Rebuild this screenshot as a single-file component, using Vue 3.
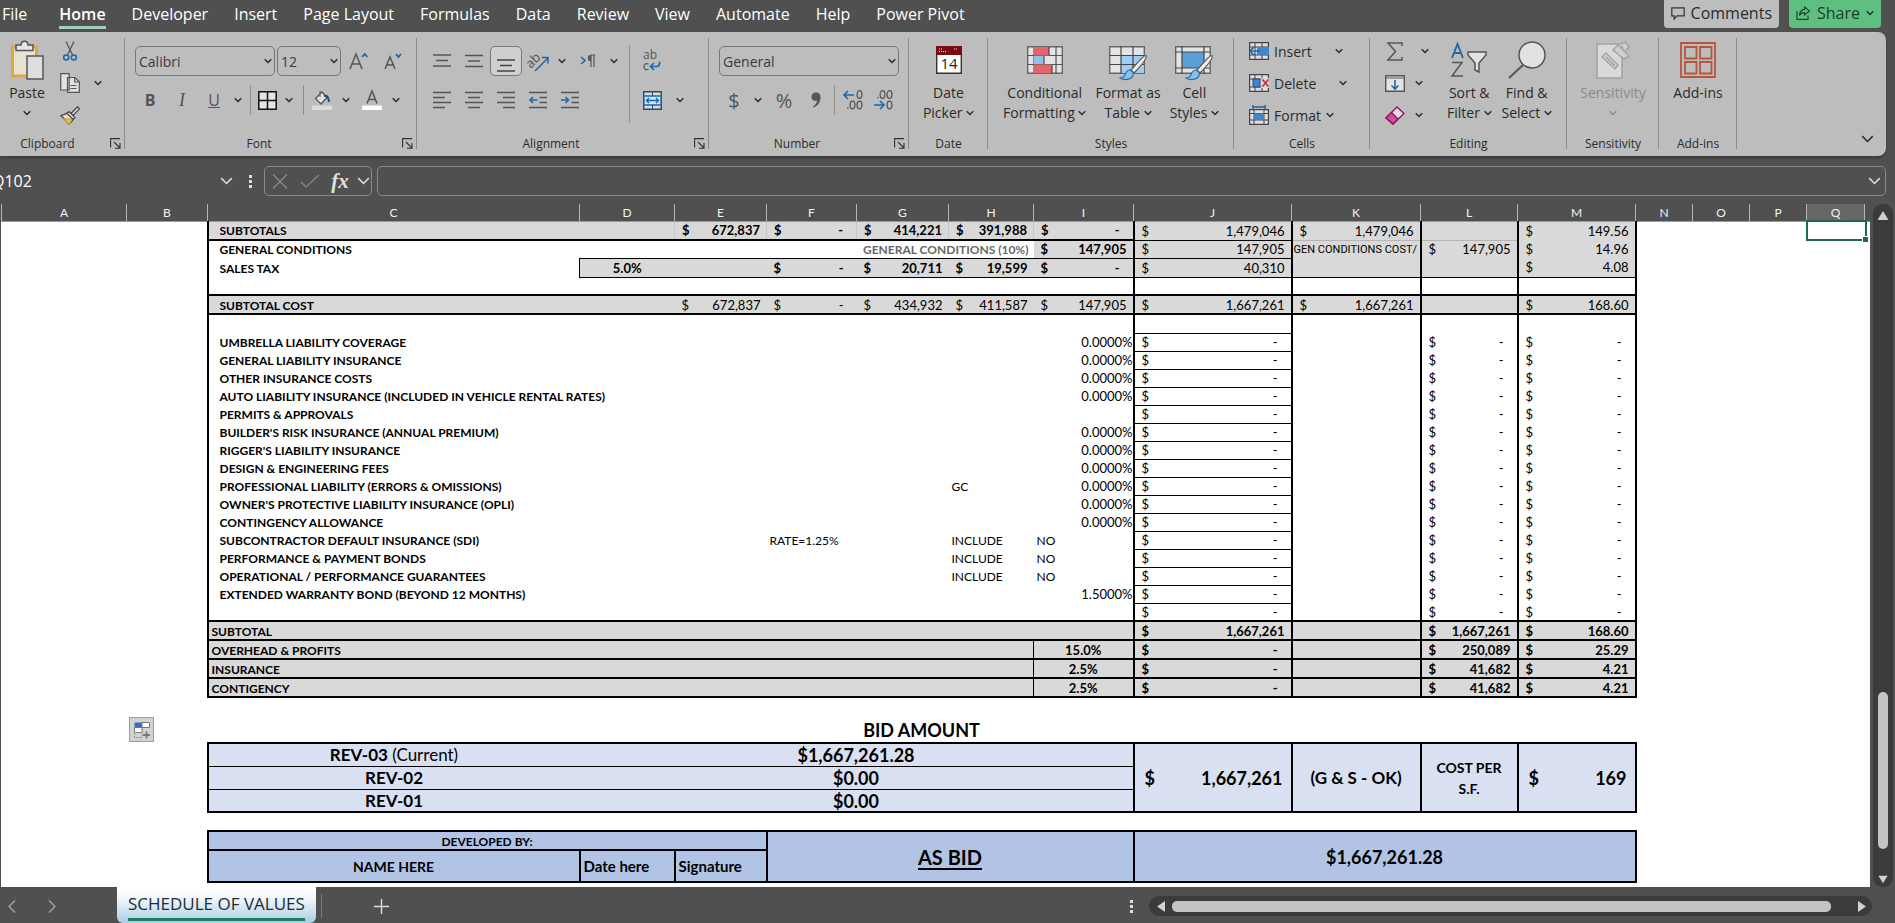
<script setup>
import { h, ref } from 'vue'

const tabs = ['File', 'Home', 'Developer', 'Insert', 'Page Layout', 'Formulas', 'Data', 'Review', 'View', 'Automate', 'Help', 'Power Pivot']
const fontName = ref('Calibri')
const fontSize = ref('12')
const numberFormat = ref('General')
const cellRef = ref('Q102')
const formula = ref('')

const Chev = (props) =>
  h('svg', { width: props.big ? 13 : 8, height: props.big ? 8 : 6, viewBox: '0 0 8 5', fill: 'none', stroke: 'currentColor', 'stroke-width': props.big ? 0.9 : 1.4, 'aria-hidden': 'true' }, [
    h('path', { d: 'M.7.7 4 4 7.3.7' }),
  ])
Chev.props = { big: Boolean }

const Launcher = () =>
  h('svg', { width: 11, height: 11, viewBox: '0 0 11 11', fill: 'none', stroke: '#333', 'stroke-width': 1.1 }, [
    h('path', { d: 'M.6 9.5V.6H10M4 4l6 6M10 5v5.2H5' }),
  ])

const columns = [
  ['A', 125], ['B', 81], ['C', 372], ['D', 95], ['E', 92], ['F', 90], ['G', 92], ['H', 85], ['I', 100],
  ['J', 158], ['K', 129], ['L', 97], ['M', 118], ['N', 57], ['O', 57], ['P', 57], ['Q', 58],
]

const t = (v, cls = '', span = 1, rows = 1) => ({ v, cls, span, rows })
const m = (v, cls = '', rows = 1) => ({ v, cls, span: 1, rows, acc: true })

const liability = [
  ['UMBRELLA LIABILITY COVERAGE', '0.0000%'],
  ['GENERAL LIABILITY INSURANCE', '0.0000%'],
  ['OTHER INSURANCE COSTS', '0.0000%'],
  ['AUTO LIABILITY INSURANCE (INCLUDED IN VEHICLE RENTAL RATES)', '0.0000%'],
  ['PERMITS & APPROVALS', ''],
  ["BUILDER'S RISK INSURANCE (ANNUAL PREMIUM)", '0.0000%'],
  ["RIGGER'S LIABILITY INSURANCE", '0.0000%'],
  ['DESIGN & ENGINEERING FEES', '0.0000%'],
  ['PROFESSIONAL LIABILITY (ERRORS & OMISSIONS)', '0.0000%', '', 'GC'],
  ["OWNER'S PROTECTIVE LIABILITY INSURANCE (OPLI)", '0.0000%'],
  ['CONTINGENCY ALLOWANCE', '0.0000%'],
  ['SUBCONTRACTOR DEFAULT INSURANCE (SDI)', 'NO', 'RATE=1.25%', 'INCLUDE'],
  ['PERFORMANCE & PAYMENT BONDS', 'NO', '', 'INCLUDE'],
  ['OPERATIONAL / PERFORMANCE GUARANTEES', 'NO', '', 'INCLUDE'],
  ['EXTENDED WARRANTY BOND (BEYOND 12 MONTHS)', '1.5000%'],
  ['', ''],
]

const rows = [
  { hgt: 19, cells: [
    t('SUBTOTALS', 'g b lab L B', 2), m('672,837', 'g b B fl'), m('-', 'g b B fl'), m('414,221', 'g b B fl'), m('391,988', 'g b B fl'), m('-', 'g b B fl'),
    m('1,479,046', 'g L R u'), m('1,479,046', 'g R fb'), t('', 'g R fb'), m('149.56', 'g R')] },
  { hgt: 18, cells: [
    t('GENERAL CONDITIONS', 'b lab L', 4), t('GENERAL CONDITIONS (10%)', 'b right dim', 2), m('147,905', 'g b u'),
    m('147,905', 'g L R u'), t('GEN CONDITIONS COST/', 'g R tight'), m('147,905', 'g R'), m('14.96', 'g R')] },
  { hgt: 19, cells: [
    t('SALES TAX', 'b lab L'), t('5.0%', 'g b mid l o u'), t('', 'g u o'), m('-', 'g b u o'), m('20,711', 'g b u o'), m('19,599', 'g b u o'), m('-', 'g b u o'),
    m('40,310', 'g L R u'), t('', 'g R u'), t('', 'g R u'), m('4.08', 'g R u')] },
  { hgt: 18, cells: [t('', 'L', 7), t('', 'L R'), t('', 'R'), t('', 'R'), t('', 'R')] },
  { hgt: 19, cells: [
    t('SUBTOTAL COST', 'g b lab L B T', 2), m('672,837', 'g B T'), m('-', 'g B T'), m('434,932', 'g B T'), m('411,587', 'g B T'), m('147,905', 'g B T'),
    m('1,667,261', 'g L R B T'), m('1,667,261', 'g R B T'), t('', 'g R B T'), m('168.60', 'g R B T')] },
  { hgt: 19, cells: [t('', 'L', 7), t('', 'L R u'), t('', 'R'), t('', 'R'), t('', 'R')] },
  ...liability.map(([name, rate, f = '', hh = '']) => ({ hgt: 18, cells: [
    t(name, 'b lab L', 3), t(f, 'near', 2), t(hh, 'near'), t(rate, rate === 'NO' ? 'near' : 'pct'),
    m('-', 'L R u'), t('', 'R'), m('-', 'R'), m('-', 'R')] })),
  { hgt: 19, cells: [t('SUBTOTAL', 'g b near L B T', 7), m('1,667,261', 'g b L R B T'), t('', 'g R B T'), m('1,667,261', 'g b R B T'), m('168.60', 'g b R B T')] },
  ...[['OVERHEAD & PROFITS', '15.0%', '250,089', '25.29'], ['INSURANCE', '2.5%', '41,682', '4.21'], ['CONTIGENCY', '2.5%', '41,682', '4.21']].map(([n, p, a, c]) => ({
    hgt: 19, cells: [t(n, 'g b near L B', 6), t(p, 'g b mid l B'), m('-', 'g b L R B'), t('', 'g R B'), m(a, 'g b R B'), m(c, 'g b R B')] })),
  { hgt: 18, cells: [t('', '', 11)] },
  { hgt: 28, cells: [t('BID AMOUNT', 'b mid x18 low', 11)] },
  { hgt: 23, cells: [
    { v: 'REV-03', tail: ' (Current)', cls: 'p b mid x17 L T u', span: 1, rows: 1 }, t('$1,667,261.28', 'p b mid x18 T u', 6),
    m('1,667,261', 'p b x18 wide L R T B', 3), t('(G & S - OK)', 'p b mid x17 R T B', 1, 3), t('COST PER S.F.', 'p b mid x14 R T B wrap', 1, 3), m('169', 'p b x18 wide R T B', 3)] },
  { hgt: 23, cells: [t('REV-02', 'p b mid x17 L u'), t('$0.00', 'p b mid x18 u', 6)] },
  { hgt: 23, cells: [t('REV-01', 'p b mid x17 L B'), t('$0.00', 'p b mid x18 B', 6)] },
  { hgt: 19, cells: [t('', '', 11)] },
  { hgt: 19, cells: [t('DEVELOPED BY:', 'd b mid x12 L T B R', 3), t('AS BID', 'd b mid x20 ul L T B R', 4, 2), t('$1,667,261.28', 'd b mid x18 L T B R', 4, 2)] },
  { hgt: 32, cells: [t('NAME HERE', 'd b mid x14 L B R'), t('Date here', 'd b near x15 B R'), t('Signature', 'd b near x15 B R')] },
]
</script>

<template>
  <div class="app">
    <header class="menu">
      <nav class="tabs" aria-label="Ribbon tabs">
        <a v-for="tab in tabs" :key="tab" href="#" :class="{ on: tab === 'Home' }">{{ tab }}</a>
      </nav>
      <div class="actions">
        <button class="comments" type="button">
          <svg width="14" height="13" viewBox="0 0 14 13" fill="none" stroke="#333" stroke-width="1.2"><path d="M.8.8h12.4v8H6L3.2 12V8.800H.8z" /></svg>
          Comments
        </button>
        <button class="share" type="button">
          <svg width="15" height="14" viewBox="0 0 15 14" fill="none" stroke="#1d4a2e" stroke-width="1.2"><path d="M1 5v8.300h11V9.500M8.500 1l5 4-5 4V6.600C6 6.600 4.500 7.500 3.500 9.500 3.700 6 5.500 3.600 8.500 3.400z" /></svg>
          Share
          <Chev />
        </button>
      </div>
    </header>

    <section class="ribbon" aria-label="Home ribbon">
      <div class="group clip-g">
        <div class="body lines">
          <button type="button" class="big paste">
            <span class="pic">
              <svg width="36" height="40" viewBox="0 0 36 40" fill="none">
                <path d="M3.500 7h24v29h-24z" fill="#e9e2d3" stroke="#e0a83a" stroke-width="3" />
                <path d="M7 10.500V5h5c.5-5 6.500-5 7 0h5v5.500z" fill="#e6e6e6" stroke="#555" stroke-width="1.500" />
                <path d="M18 16h16v23H18z" fill="#dedede" stroke="#555" stroke-width="1.500" />
              </svg>
            </span>
            <span>Paste</span><span><Chev /></span>
          </button>
          <div class="stack three">
            <button type="button" class="w28" aria-label="Cut">
              <svg width="14" height="20" viewBox="0 0 14 20" fill="none"><path d="M3 .5 9.600 14M11 .5 4.400 14" stroke="#555" stroke-width="1.300" /><circle cx="3.200" cy="16.500" r="2.500" stroke="#1f66a5" stroke-width="1.600" /><circle cx="10.800" cy="16.500" r="2.500" stroke="#1f66a5" stroke-width="1.600" /></svg>
            </button>
            <button type="button" class="w28" aria-label="Copy">
              <svg width="20" height="20" viewBox="0 0 20 20" fill="#e2e2e2" stroke="#555" stroke-width="1.200"><path d="M.7.700h8.500V17H.700zM7.500 4.500h7.500l4.300 4.300v10.500H7.500z" /><path d="M14.700 4.700V9h4.500M10.500 12.500h6M10.500 15.500h6" fill="none" /></svg>
            </button>
            <button type="button" class="w28" aria-label="Format Painter">
              <svg width="20" height="19" viewBox="0 0 20 19" fill="none" stroke="#444" stroke-width="1.200"><path d="M1 9.500 9 18c2.500-1.500 4-3.500 4.500-6L8 6.500c-2 1.500-4 2.500-7 3z" fill="#e8e0d0" /><path d="M4 12.500l8 1-3 4.500z" fill="#f2c53d" stroke="#caa02c" /><path d="M7 7.500l2-2 6 6-2 2zM11 7.500 17.500.800l2 2L13 9.500z" fill="#ddd" /></svg>
            </button>
          </div>
          <button type="button" class="w28 copyopt" aria-label="Copy options"><Chev /></button>
        </div>
        <div class="cap">Clipboard</div><button type="button" class="launch" aria-label="Clipboard settings"><Launcher /></button>
      </div>

      <div class="group font-g">
        <div class="body rows">
          <div class="row fields">
            <label class="pick grow"><select v-model="fontName" aria-label="Font"><option>Calibri</option></select><Chev /></label>
            <label class="pick size"><select v-model="fontSize" aria-label="Font size"><option>12</option></select><Chev /></label>
            <button type="button" class="w32" aria-label="Increase font size"><svg width="20" height="18" viewBox="0 0 20 18" fill="none" stroke="#555" stroke-width="1.500"><path d="M1 17 7 2l6 15M3 12h8" /><path d="M13 5l2.700-3 2.700 3" stroke="#1f66a5" stroke-width="1.800" /></svg></button>
            <button type="button" class="w32" aria-label="Decrease font size"><svg width="18" height="18" viewBox="0 0 18 18" fill="none" stroke="#555" stroke-width="1.500"><path d="M1 17 6 5l5 12M3 13h6" /><path d="M12 2l2.500 3L17 2" stroke="#1f66a5" stroke-width="1.800" /></svg></button>
          </div>
          <div class="row">
            <button type="button" class="w32 glyph bold">B</button>
            <button type="button" class="w32 glyph ital">I</button>
            <button type="button" class="w32 glyph under">U</button>
            <button type="button" class="w16" aria-label="Underline options"><Chev /></button>
            <i class="sep"></i>
            <button type="button" class="w24" aria-label="Borders"><svg width="19" height="19" viewBox="0 0 19 19" fill="#e4e4e4" stroke="#111" stroke-width="1.500"><path d="M.8.800h17.400v17.400H.800zM9.500.800v17.400M.800 9.500h17.400" /></svg></button>
            <button type="button" class="w20" aria-label="Border options"><Chev /></button>
            <i class="sep"></i>
            <button type="button" class="w28" aria-label="Fill color"><svg width="20" height="20" viewBox="0 0 20 20" fill="none"><path d="M3.500 8.500 10 2l5 5.500L9 14z" fill="#e2e2e2" stroke="#555" stroke-width="1.300" /><path d="M8 1v6" stroke="#555" /><path d="M12 6c3-1 4.500 1 5 6" stroke="#1f4e79" stroke-width="2" /><path d="M0 15.500h20V20H0z" fill="#dcdcdc" /></svg></button>
            <button type="button" class="w20" aria-label="Fill options"><Chev /></button>
            <button type="button" class="w32" aria-label="Font color"><svg width="20" height="20" viewBox="0 0 20 20" fill="none"><path d="M5 13.500 10 1l5 12.500M6.700 9.500h6.600" stroke="#555" stroke-width="1.500" /><path d="M0 15.500h20V20H0z" fill="#fff" /></svg></button>
            <button type="button" class="w16" aria-label="Font color options"><Chev /></button>
          </div>
        </div>
        <div class="cap">Font</div><button type="button" class="launch" aria-label="Font settings"><Launcher /></button>
      </div>

      <div class="group align-g">
        <div class="body cols">
          <div class="rows">
            <div class="row fields">
              <button type="button" class="w32" aria-label="Top align"><svg width="18" height="14" viewBox="0 0 18 14" stroke="#555" stroke-width="1.400"><path d="M0 1h18M3 6.500h12M0 12h18" /></svg></button>
              <button type="button" class="w32" aria-label="Middle align"><svg width="18" height="14" viewBox="0 0 18 14" stroke="#555" stroke-width="1.400"><path d="M0 1.500h18M3 7h12M0 12.500h18" /></svg></button>
              <button type="button" class="w32 sel" aria-label="Bottom align"><svg width="18" height="22" viewBox="0 0 18 22" stroke="#444" stroke-width="1.400"><path d="M0 10h18M3 15.500h12M0 21h18" /></svg></button>
              <button type="button" class="w32" aria-label="Orientation"><svg width="22" height="22" viewBox="0 0 22 22"><text x="-2" y="13" transform="rotate(-45 8 9)" font-family="Open Sans, sans-serif" font-size="13" fill="#555">ab</text><path d="M8 21 21 8M15 7.500H21V13.500" fill="none" stroke="#1f66a5" stroke-width="1.500" /></svg></button>
              <button type="button" class="w16" aria-label="Orientation options"><Chev /></button>
              <button type="button" class="w36" aria-label="Text direction"><svg width="16" height="14" viewBox="0 0 16 14" fill="none"><path d="M1 3l4 3.500L1 10" stroke="#1f66a5" stroke-width="1.600" /><path d="M11 13V1M14 13V1M15.500 1H11" stroke="#555" stroke-width="1.200" /><path d="M11 .800a3.200 3.200 0 0 0 0 6.400z" fill="#555" /></svg></button>
              <button type="button" class="w16" aria-label="Direction options"><Chev /></button>
            </div>
            <div class="row">
              <button type="button" class="w32" aria-label="Align left"><svg width="18" height="18" viewBox="0 0 18 18" stroke="#555" stroke-width="1.400"><path d="M0 1.500h18M0 6.500h12M0 11.500h18M0 16.500h12" /></svg></button>
              <button type="button" class="w32" aria-label="Center"><svg width="18" height="18" viewBox="0 0 18 18" stroke="#555" stroke-width="1.400"><path d="M0 1.500h18M3 6.500h12M0 11.500h18M3 16.500h12" /></svg></button>
              <button type="button" class="w32" aria-label="Align right"><svg width="18" height="18" viewBox="0 0 18 18" stroke="#555" stroke-width="1.400"><path d="M0 1.500h18M6 6.500h12M0 11.500h18M6 16.500h12" /></svg></button>
              <button type="button" class="w32" aria-label="Decrease indent"><svg width="18" height="18" viewBox="0 0 18 18" fill="none" stroke="#555" stroke-width="1.400"><path d="M0 1.500h18M10.500 6.500H18M10.500 11.500H18M0 16.500h18" /><path d="M8.500 9H1M4 6 1 9l3 3" stroke="#1f66a5" stroke-width="1.600" /></svg></button>
              <button type="button" class="w32" aria-label="Increase indent"><svg width="18" height="18" viewBox="0 0 18 18" fill="none" stroke="#555" stroke-width="1.400"><path d="M0 1.500h18M10.500 6.500H18M10.500 11.500H18M0 16.500h18" /><path d="M0 9h7.500M4.500 6l3 3-3 3" stroke="#1f66a5" stroke-width="1.600" /></svg></button>
            </div>
          </div>
          <i class="sep tall"></i>
          <div class="rows">
            <div class="row fields">
              <button type="button" class="w36" aria-label="Wrap text"><svg width="20" height="20" viewBox="0 0 20 20" fill="#555" font-family="Open Sans, sans-serif" font-size="12"><text x="1" y="8">ab</text><path d="M6.500 13.300C3.500 11.800 2 13.500 2 15.700S3.800 19.400 6.500 18.200" fill="none" stroke="#555" stroke-width="1.200" /><path d="M17.500 10.500v2c0 2-1 3-3 3H9M12 12l-3.500 3.500L12 19" fill="none" stroke="#1f66a5" stroke-width="1.600" /></svg></button>
            </div>
            <div class="row">
              <button type="button" class="w36" aria-label="Merge and center"><svg width="19" height="19" viewBox="0 0 19 19" fill="none"><path d="M.7.700h17.600v17.600H.700z" fill="#dcdcdc" stroke="#1f4e79" stroke-width="1.400" /><path d="M1 5h17v9H1z" fill="#cfe6f8" stroke="#1f66a5" stroke-width="1.400" /><path d="M9.500 1v4M9.500 14v4" stroke="#1f4e79" /><path d="M3.500 9.500h12M6 7 3.500 9.500 6 12M13 7l2.500 2.500L13 12" stroke="#1f66a5" stroke-width="1.400" /></svg></button>
              <button type="button" class="w20" aria-label="Merge options"><Chev /></button>
            </div>
          </div>
        </div>
        <div class="cap">Alignment</div><button type="button" class="launch" aria-label="Alignment settings"><Launcher /></button>
      </div>

      <div class="group num-g">
        <div class="body rows">
          <div class="row fields"><label class="pick grow"><select v-model="numberFormat" aria-label="Number format"><option>General</option></select><Chev /></label></div>
          <div class="row">
            <button type="button" class="w32 glyph money">$</button>
            <button type="button" class="w16" aria-label="Currency options"><Chev /></button>
            <button type="button" class="w36 glyph money">%</button>
            <button type="button" class="w28" aria-label="Comma style"><svg width="10" height="16" viewBox="0 0 10 16" fill="#555"><path d="M5 .500a4.300 4.300 0 0 1 4.500 4.800C9.500 10 7 14 2.500 15.500L2 14.500C4.500 13 5.800 11 6 8.500 2.500 9.500.500 7.500.500 5A4.300 4.300 0 0 1 5 .500z" /></svg></button>
            <i class="sep"></i>
            <button type="button" class="w28" aria-label="Increase decimal"><svg width="20" height="20" viewBox="0 0 20 20" fill="none" stroke="#555" stroke-width="1.300"><ellipse cx="16.500" cy="4.500" rx="2.400" ry="3.800" /><ellipse cx="9.500" cy="15" rx="2.400" ry="3.800" /><ellipse cx="16.500" cy="15" rx="2.400" ry="3.800" /><path d="M4 18.200h1.600" /><path d="M11 5H1M5 1 1 5l4 4" stroke="#1f66a5" stroke-width="1.500" /></svg></button>
            <button type="button" class="w32" aria-label="Decrease decimal"><svg width="20" height="20" viewBox="0 0 20 20" fill="none" stroke="#555" stroke-width="1.300"><ellipse cx="9.500" cy="4.500" rx="2.400" ry="3.800" /><ellipse cx="16.500" cy="4.500" rx="2.400" ry="3.800" /><ellipse cx="16.500" cy="15" rx="2.400" ry="3.800" /><path d="M4 7.700h1.600" /><path d="M1 15h10M7 11l4 4-4 4" stroke="#1f66a5" stroke-width="1.500" /></svg></button>
          </div>
        </div>
        <div class="cap">Number</div><button type="button" class="launch" aria-label="Number settings"><Launcher /></button>
      </div>

      <div class="group date-g">
        <div class="body bigs">
          <button type="button" class="big">
            <span class="pic"><svg width="26" height="28" viewBox="0 0 26 28"><path d="M.7.700h24.600v26.600H.700z" fill="#fff" stroke="#333" stroke-width="1.400" /><path d="M0 0h26v9H0z" fill="#7d0a10" /><path d="M3 3h4M3 5.500h8M18 3h4" stroke="#eee" stroke-width="1" stroke-dasharray="1 1" /><text x="13" y="23" text-anchor="middle" font-family="Open Sans, sans-serif" font-size="15" fill="#222">14</text></svg></span>
            <span>Date</span><span>Picker <Chev /></span>
          </button>
        </div>
        <div class="cap">Date</div>
      </div>

      <div class="group style-g">
        <div class="body bigs">
          <button type="button" class="big">
            <span class="pic"><svg width="36" height="28" viewBox="0 0 36 28"><path d="M.7.700h34.600v26.600H.700z" fill="#e4e4e4" stroke="#666" stroke-width="1.400" /><path d="M0 9.500h36M0 18.500h36M7 0v28M29 0v28" stroke="#555" stroke-width="1.200" /><path d="M7 1h15v8.500H7zM7 18.500h18V27H7z" fill="#e0666c" /><path d="M7 10h10v8H7z" fill="#8fc1ee" /><path d="M17 10v8M22 1v8M25 19v8" stroke="#333" /></svg></span>
            <span>Conditional</span><span>Formatting <Chev /></span>
          </button>
          <button type="button" class="big">
            <span class="pic low"><svg width="38" height="34" viewBox="0 0 38 34"><path d="M.7.700h34.600v26.600H.700z" fill="#e4e4e4" stroke="#666" stroke-width="1.400" /><path d="M12 9.500h23V27H12z" fill="#9fcdf3" /><path d="M0 9.500h35M0 18.500h35M12 0v28M24 0v28" stroke="#444" stroke-width="1.200" /><path d="M37 9.500c-2 0-4 2-15 14.500l3 3C34 18 38 12 37 9.500z" fill="#eee" stroke="#555" stroke-width="1.200" /><path d="M21.500 24c-5 0-5 4-6 6-1 1.500-3 2-5 2 6 3 14 1.500 14-5z" fill="#86c1f0" stroke="#2b6ca8" stroke-width="1.200" /></svg></span>
            <span>Format as</span><span>Table <Chev /></span>
          </button>
          <button type="button" class="big">
            <span class="pic low"><svg width="38" height="34" viewBox="0 0 38 34"><path d="M.7.700h34.600v26.600H.700z" fill="#e4e4e4" stroke="#666" stroke-width="1.400" /><path d="M7 6h22v16H7z" fill="#5c9fd8" /><path d="M0 6h35M0 22h35M7 0v28M29 0v28" stroke="#444" stroke-width="1.200" /><path d="M37 9.500c-2 0-4 2-15 14.500l3 3C34 18 38 12 37 9.500z" fill="#eee" stroke="#555" stroke-width="1.200" /><path d="M21.500 24c-5 0-5 4-6 6-1 1.500-3 2-5 2 6 3 14 1.500 14-5z" fill="#86c1f0" stroke="#2b6ca8" stroke-width="1.200" /></svg></span>
            <span>Cell</span><span>Styles <Chev /></span>
          </button>
        </div>
        <div class="cap">Styles</div>
      </div>

      <div class="group cell-g">
        <div class="body stack three">
          <button type="button" class="item"><svg width="20" height="18" viewBox="0 0 20 18" fill="none"><path d="M.6.600h18.800v16.800H.600z" fill="#e0e0e0" stroke="#444" stroke-width="1.200" /><path d="M0 5h20M0 13h20M6 0v18M13 0v18" stroke="#444" /><path d="M8 5h12v8H8z" fill="#3f86cf" /><path d="M11 9H1M5 5 1 9l4 4" stroke="#1f66a5" stroke-width="1.700" /></svg><span>Insert</span><i class="far"><Chev /></i></button>
          <button type="button" class="item"><svg width="20" height="18" viewBox="0 0 20 18" fill="none"><path d="M.6.600h18.800v16.800H.600z" fill="#e0e0e0" stroke="#444" stroke-width="1.200" /><path d="M0 5h20M0 13h20M6 0v18M13 0v18" stroke="#444" /><path d="M4 5h7v8H4z" fill="#3f86cf" stroke="#1f4e79" /><path d="M12 4h8v10h-8z" fill="#d6d6d6" /><path d="m13.500 5.500 6 7m0-7-6 7" stroke="#c42b35" stroke-width="1.600" /></svg><span>Delete</span><i class="far"><Chev /></i></button>
          <button type="button" class="item"><svg width="20" height="20" viewBox="0 0 20 20" fill="none"><path d="M.6 4.600h18.800v14.800H.600z" fill="#e0e0e0" stroke="#444" stroke-width="1.200" /><path d="M0 8.500h20M0 15h20M5 4v16M15 4v16" stroke="#444" /><path d="M5 8.500h10V15H5z" fill="#3f86cf" /><path d="M4 2h12M4 0v4M16 0v4" stroke="#1f66a5" stroke-width="1.400" /></svg><span>Format</span><i><Chev /></i></button>
        </div>
        <div class="cap">Cells</div>
      </div>

      <div class="group edit-g">
        <div class="body lines">
          <div class="stack three pairs">
            <div class="row"><button type="button" class="w32" aria-label="AutoSum"><svg width="16" height="19" viewBox="0 0 16 19" fill="none" stroke="#555" stroke-width="1.500"><path d="M15 4V1H1l7.500 8.500L1 18h14v-3" /></svg></button><button type="button" class="w28" aria-label="AutoSum options"><Chev /></button></div>
            <div class="row"><button type="button" class="w32" aria-label="Fill"><svg width="20" height="17" viewBox="0 0 20 17" fill="none"><path d="M.7.700h18.600v15.600H.700z" fill="#e4e4e4" stroke="#555" stroke-width="1.400" /><path d="M0 3h20" stroke="#555" /><path d="M10 5v9M6.500 10.500 10 14l3.500-3.500" stroke="#1f66a5" stroke-width="1.600" /></svg></button><button type="button" class="w16" aria-label="Fill direction options"><Chev /></button></div>
            <div class="row"><button type="button" class="w32" aria-label="Clear"><svg width="20" height="19" viewBox="0 0 20 19" fill="#eed9e6" stroke="#8a1560" stroke-width="1.300"><path d="M1 12 12 1l7 6.500L8 18z" /><path d="M1 12 6.500 6.500 13 13 8 18z" fill="#d14d9c" /></svg></button><button type="button" class="w16" aria-label="Clear options"><Chev /></button></div>
          </div>
          <button type="button" class="big">
            <span class="pic"><svg width="38" height="36" viewBox="0 0 38 36" fill="none" stroke="#555" stroke-width="1.500"><path d="M2 16 7.500 2 13 16M4 11h7" stroke="#1f66a5" stroke-width="1.800" /><path d="M2 20.500h10L2 34h11" /><path d="M18 10h18v3l-7 8v9l-4-2v-7l-7-8z" fill="#e2e2e2" /></svg></span>
            <span>Sort &amp;</span><span>Filter <Chev /></span>
          </button>
          <button type="button" class="big">
            <span class="pic"><svg width="38" height="38" viewBox="0 0 38 38" fill="none" stroke="#555" stroke-width="1.500"><circle cx="24" cy="14" r="13" fill="#e2e2e2" /><path d="M15 24 1 37" stroke-width="2" /></svg></span>
            <span>Find &amp;</span><span>Select <Chev /></span>
          </button>
        </div>
        <div class="cap">Editing</div>
      </div>

      <div class="group sens-g">
        <div class="body bigs">
          <button type="button" class="big off" disabled>
            <span class="pic"><svg width="34" height="38" viewBox="0 0 34 38" fill="#d9d9d9" stroke="#a3a3a3" stroke-width="1.500"><path d="M1 3h25v34H1z" /><path d="M6 16l4-4 12 12-3 4zM17 9l5-5 11 11-5 3zM25 3l4-2 4 5-3 4" fill="#cfcfcf" /><path d="M10 16l9 9" /></svg></span>
            <span>Sensitivity</span><span><Chev /></span>
          </button>
        </div>
        <div class="cap">Sensitivity</div>
      </div>

      <div class="group add-g">
        <div class="body bigs">
          <button type="button" class="big">
            <span class="pic"><svg width="36" height="36" viewBox="0 0 36 36" fill="none" stroke="#b9543f" stroke-width="1.800"><path d="M1 1h34v34H1zM5 5h11.500v11.500H5zM20 5h11.500v11.500H20zM5 20h11.500v11.500H5zM20 20h11.500v11.500H20z" /></svg></span>
            <span>Add-ins</span>
          </button>
        </div>
        <div class="cap">Add-ins</div>
      </div>
      <button type="button" class="collapse" aria-label="Collapse ribbon"><Chev big /></button>
    </section>

    <section class="fbar">
      <input v-model="cellRef" class="namebox" aria-label="Name box">
      <button type="button" class="w36" aria-label="Name list"><Chev big /></button>
      <span class="dots"><b></b><b></b><b></b></span>
      <div class="fx">
        <button type="button" class="w30" aria-label="Cancel"><svg width="16" height="15" viewBox="0 0 16 15" stroke="#8b8b8b" stroke-width="1.200"><path d="m1 .5 14 14m0-14-14 14" /></svg></button>
        <button type="button" class="w30" aria-label="Enter"><svg width="20" height="14" viewBox="0 0 20 14" fill="none" stroke="#8b8b8b" stroke-width="1.200"><path d="m1 8 5 5L19 1" /></svg></button>
        <button type="button" class="w30 fn" aria-label="Insert function">fx</button>
        <button type="button" class="w16" aria-label="Function list"><Chev big /></button>
      </div>
      <div class="formula">
        <input v-model="formula" aria-label="Formula bar">
        <button type="button" aria-label="Expand formula bar"><Chev big /></button>
      </div>
    </section>

    <main class="sheet">
      <div class="grid">
        <table>
          <colgroup><col v-for="c in columns" :key="c[0]" :style="{ width: c[1] + 'px' }"><col></colgroup>
          <thead>
            <tr><th v-for="c in columns" :key="c[0]" scope="col" :class="{ cur: c[0] === 'Q' }">{{ c[0] }}</th><th class="end"></th></tr>
          </thead>
          <tbody>
            <tr v-for="(r, i) in rows" :key="i" :style="{ height: r.hgt + 'px' }">
              <td colspan="2"></td>
              <td v-for="(c, j) in r.cells" :key="j" :colspan="c.span" :rowspan="c.rows" :class="c.cls">
                <div v-if="c.acc" class="acc"><span>$</span><span :class="{ dash: c.v === '-' }">{{ c.v }}</span></div>
                <template v-else>{{ c.v }}<span v-if="c.tail" class="tail">{{ c.tail }}</span></template>
              </td>
              <td colspan="3"></td>
              <td class="q"><div v-if="i === 0" class="cursor"></div></td>
              <td></td>
            </tr>
          </tbody>
        </table>
        <button type="button" class="smart" aria-label="Paste options">
          <svg width="18" height="18" viewBox="0 0 18 18"><path d="M1.500 1.500h7.500v5H1.500z" fill="#3f66c9" /><path d="M9 1.500h7.500v5H9zM1.500 6.500H9v5H1.500z" fill="#fff" stroke="#777" /><path d="M1.500 11.500H9v5H1.500z" fill="none" stroke="#888" stroke-dasharray="1.500 1" /><path d="M13.500 10.500v7M10 14h7" stroke="#777" stroke-width="1.800" /></svg>
        </button>
      </div>
      <div class="vbar">
        <svg width="12" height="9" viewBox="0 0 12 9"><path d="M6 0l5.500 9H.500z" fill="#d0d0d0" /></svg>
        <div class="vtrack"><div class="vthumb"></div></div>
        <svg width="10" height="9" viewBox="0 0 12 9"><path d="M6 9 .500 0h11z" fill="#d0d0d0" /></svg>
      </div>
    </main>

    <footer class="foot">
      <div class="nav">
        <button type="button" aria-label="Previous sheet"><svg width="8" height="13" viewBox="0 0 8 13" fill="none" stroke="#aaa" stroke-width="1.200"><path d="M7 .5 1 6.500l6 6" /></svg></button>
        <button type="button" aria-label="Next sheet"><svg width="8" height="13" viewBox="0 0 8 13" fill="none" stroke="#aaa" stroke-width="1.200"><path d="m1 .5 6 6-6 6" /></svg></button>
      </div>
      <button type="button" class="stab"><span>SCHEDULE OF VALUES</span></button>
      <i class="fsep"></i>
      <button type="button" class="plus" aria-label="New sheet"><svg width="15" height="15" viewBox="0 0 15 15" stroke="#ddd" stroke-width="1.400"><path d="M7.500 0v15M0 7.500h15" /></svg></button>
      <span class="dots"><b></b><b></b><b></b></span>
      <div class="hbar">
        <svg width="8" height="11" viewBox="0 0 8 11"><path d="M8 0v11L0 5.500z" fill="#d0d0d0" /></svg>
        <div class="htrack"><div class="hthumb"></div></div>
        <svg width="8" height="11" viewBox="0 0 8 11"><path d="M0 0v11l8-5.500z" fill="#d0d0d0" /></svg>
      </div>
    </footer>
  </div>
</template>

<style>
body { background: #505050; overflow: hidden; }
</style>

<style scoped>
* { box-sizing: border-box; }
.app { display: flex; flex-direction: column; height: 100vh; background: #505050; font-family: "Open Sans", "Noto Sans", sans-serif; font-size: 14px; color: #2b2b2b; overflow: hidden; }
button { border: 0; padding: 0; background: none; font: inherit; color: inherit; display: flex; align-items: center; justify-content: center; flex: none; }
svg { flex: none; overflow: visible; }

.menu { display: flex; justify-content: space-between; height: 32px; flex: none; }
.tabs { display: flex; gap: 26px; padding-left: 2px; }
.tabs a { position: relative; color: #fff; text-decoration: none; font-size: 16px; line-height: 28px; white-space: nowrap; }
.tabs a.on { font-weight: 600; margin-left: 6px; }
.tabs a.on::after { content: ""; position: absolute; left: 0; right: 0; top: 26px; height: 3px; background: #9fd0ba; }
.actions { display: flex; gap: 10px; padding-right: 14px; font-size: 16px; }
.actions button { height: 28px; gap: 6px; padding: 0 7px 2px; border-radius: 0 0 4px 4px; }
.comments { background: #bdbdbd; }
.share { background: #5fbf80; color: #1d3d2a; }

.ribbon { display: flex; flex: none; height: 124px; margin-right: 9px; background: #bdbdbd; border-radius: 0 8px 8px 0; box-shadow: 0 2px 3px #3a3a3a; }
.group { position: relative; display: flex; flex-direction: column; flex: none; }
.group::after { content: ""; position: absolute; right: 0; top: 6px; bottom: 7px; width: 1px; background: #8d8d8d; }
.clip-g { width: 125px; } .font-g, .align-g { width: 292px; } .num-g { width: 200px; } .date-g { width: 79px; }
.style-g { width: 246px; } .cell-g { width: 136px; } .edit-g { width: 197px; } .sens-g { width: 92px; } .add-g { width: 78px; }
.body { flex: 1; min-height: 0; }
.cap { height: 24px; line-height: 24px; text-align: center; font-size: 12px; }
.clip-g .cap { padding-right: 30px; } .font-g .cap { padding-right: 24px; } .align-g .cap { padding-right: 24px; } .num-g .cap { padding-right: 24px; }
.launch { position: absolute; right: 4px; bottom: 7px; }
.rows { display: flex; flex-direction: column; padding-top: 14px; gap: 8px; }
.font-g .rows, .num-g .body, .align-g .cols { padding-left: 9px; }
.cols { display: flex; }
.row { display: flex; align-items: center; height: 32px; }
.row.fields { height: 30px; }
.font-g .fields { padding-left: 1px; padding-right: 8px; gap: 2px; }
.num-g .fields { padding: 0 10px 0 1px; }
.w16 { width: 16px; } .w20 { width: 20px; } .w24 { width: 24px; } .w28 { width: 28px; } .w30 { width: 30px; } .w32 { width: 32px; } .w36 { width: 36px; }
.sep { width: 9px; height: 30px; background: linear-gradient(#8d8d8d, #8d8d8d) center / 1px 100% no-repeat; flex: none; }
.sep.tall { height: 78px; margin: 13px 0 0 3px; }
.sel { height: 30px; background: #cfcfcf; border: 1px solid #777; border-radius: 5px; }
.pick { position: relative; display: block; height: 30px; }
.pick.grow { flex: 1; }
.pick.size { width: 64px; }
.pick select { appearance: none; width: 100%; height: 100%; padding: 0 20px 0 3px; border: 1px solid #777; border-radius: 5px; background: transparent; font: inherit; color: #3a3a3a; }
.pick svg { position: absolute; right: 3px; top: 12px; }
.glyph { font-size: 16px; color: #555; }
.bold { font-weight: 700; } .ital { font-family: "Liberation Serif", serif; font-style: italic; font-size: 18px; } .under { text-decoration: underline; } .money { font-size: 20px; }

.lines { display: flex; }
.stack { display: flex; flex-direction: column; }
.three { padding-top: 3px; }
.three > * { height: 32px; }
.clip-g .stack { padding-left: 2px; }
.copyopt { height: 102px; }
.big { flex-direction: column; justify-content: flex-start; align-self: flex-start; padding-top: 10px; line-height: 20px; white-space: nowrap; }
.big .pic { display: flex; align-items: center; justify-content: center; height: 36px; margin-bottom: 5px; }
.big .pic.low { padding-top: 5px; }
.paste { width: 54px; }
.bigs { display: flex; justify-content: center; }
.big span svg { vertical-align: 2px; }
.style-g .bigs { gap: 9px; }
.edit-g .big + .big { margin-left: 10px; }
.off { color: #8b8b8b; }
.item { justify-content: flex-start; padding-left: 15px; gap: 5px; }
.item i { display: flex; }
.item .far { margin-left: 18px; }
.pairs { padding-left: 9px; width: 77px; }
.collapse { margin: auto 12px 13px auto; }

.fbar { display: flex; align-items: center; flex: none; height: 48px; padding: 2px 9px 0 0; color: #e0e0e0; }
.namebox { width: 208px; height: 28px; border: 0; padding: 0; background: none; color: #fff; font: 16px "Open Sans", sans-serif; text-indent: -8px; outline: 0; }
.dots { display: flex; flex-direction: column; gap: 2px; width: 13px; align-items: center; }
.dots b { width: 3px; height: 3px; background: #ddd; }
.fx { display: flex; height: 30px; margin: 0 5px 0 7px; border: 1px solid #8a8a8a; border-radius: 5px; }
.fn { font: italic 700 21px "Liberation Serif", serif; }
.formula { display: flex; flex: 1; height: 30px; border: 1px solid #8a8a8a; border-radius: 5px; }
.formula input { flex: 1; min-width: 0; border: 0; background: none; color: #fff; outline: 0; }
.formula button { width: 22px; }

.sheet { display: flex; flex: 1; min-height: 0; }
.grid { position: relative; flex: 1; min-width: 0; padding-left: 1px; overflow: hidden; background: linear-gradient(90deg, #505050 1px, #fff 1px); }
table { width: 100%; table-layout: fixed; border-collapse: collapse; font-family: Lato, "Open Sans", sans-serif; font-size: 13px; color: #000; }
th { height: 17px; padding: 1px 0 0; background: #505050; color: #f2f2f2; font-weight: 400; font-size: 12px; line-height: 14px; border-right: 1px solid #b5b5b5; border-bottom: 1px solid #9a9a9a; }
th:first-child { border-left: 1px solid #b5b5b5; }
th.cur { background: #666; }
th.end { border-right: 0; }
td { padding: 1px 0 0; line-height: 15px; white-space: nowrap; border: 0 solid #000; vertical-align: middle; }
.acc { display: flex; justify-content: space-between; padding: 0 6px 0 7px; }
.wide .acc { padding: 0 8px 0 10px; }
.dash { padding-right: 7px; }
.g { background: #d9d9d9; } .p { background: #d9e0f1; } .d { background: #b2c4e6; }
.q { position: relative; }
.b { font-weight: 700; } .dim { color: #666; }
.lab { padding-left: 11px; } .near { padding-left: 3px; }
.lab, .near, .dim, .x12 { font-size: 12px; }
.mid { text-align: center; } .right { text-align: right; padding-right: 5px; } .pct { text-align: right; }
.tight { font-family: Roboto, sans-serif; font-size: 11px; padding-left: 1px; }
.x14 { font-size: 14px; line-height: 21px; } .x15 { font-size: 15px; line-height: 21px; } .x17 { font-size: 17px; line-height: 18px; } .x18 { font-size: 18px; line-height: 18px; } .x20 { font-size: 20px; line-height: 22px; }
.wrap { white-space: normal; padding: 0 10px; }
.low { vertical-align: bottom; line-height: 24px; }
.tail { font-weight: 400; white-space: pre; }
.ul { text-decoration: underline; text-underline-offset: 3px; }
.l { border-left-width: 1px; } .u { border-bottom-width: 1px; } .o { border-top-width: 1px; }
.fl { border-left: 1px solid #c3c8cf; } .fb { border-bottom: 1px solid #b5b5b5; }
.L { border-left: 2px solid #000; } .R { border-right: 2px solid #000; } .T { border-top: 2px solid #000; } .B { border-bottom: 2px solid #000; }
.cursor { position: absolute; inset: -2px -2px -1px -1px; border: 2px solid #1f6b45; }
.cursor::after { content: ""; position: absolute; right: -3px; bottom: -3px; width: 5px; height: 5px; background: #1f6b45; box-shadow: 0 0 0 1px #fff; }
.smart { position: absolute; left: 129px; top: 513px; width: 25px; height: 25px; background: #d2d2d2; border: 1px solid #9d9d9d; }

.vbar { display: flex; flex-direction: column; align-items: center; width: 20px; margin: 0 2px 0 3px; padding: 7px 0 3px; background: #3b3b3b; border-radius: 9px; flex: none; }
.vtrack { flex: 1; width: 10px; display: flex; flex-direction: column; justify-content: flex-end; }
.vthumb { height: 24%; margin-bottom: 26px; border-radius: 5px; background: #c4c4c4; }

.foot { display: flex; align-items: center; flex: none; height: 36px; padding: 2px 23px 0 0; }
.nav { display: flex; gap: 32px; width: 117px; padding-left: 8px; }
.stab { height: 36px; align-self: flex-end; padding: 0 11px; border-radius: 0 0 6px 6px; background: linear-gradient(#fff, #eef5fa 35%, #a9cde4); font-size: 17px; color: #1d2b33; }
.stab span { border-bottom: 3px solid #1f7a5c; line-height: 28px; white-space: nowrap; }
.fsep { width: 1px; height: 24px; margin-left: 5px; background: #7a7a7a; }
.plus { margin-left: 52px; }
.foot .dots { margin-left: auto; margin-right: 11px; }
.hbar { display: flex; align-items: center; width: 723px; max-width: 40%; height: 20px; padding: 0 6px 0 8px; gap: 7px; border-radius: 10px; background: #3b3b3b; }
.htrack { flex: 1; }
.hthumb { width: 97%; height: 11px; border-radius: 5px; background: #c4c4c4; }
</style>
